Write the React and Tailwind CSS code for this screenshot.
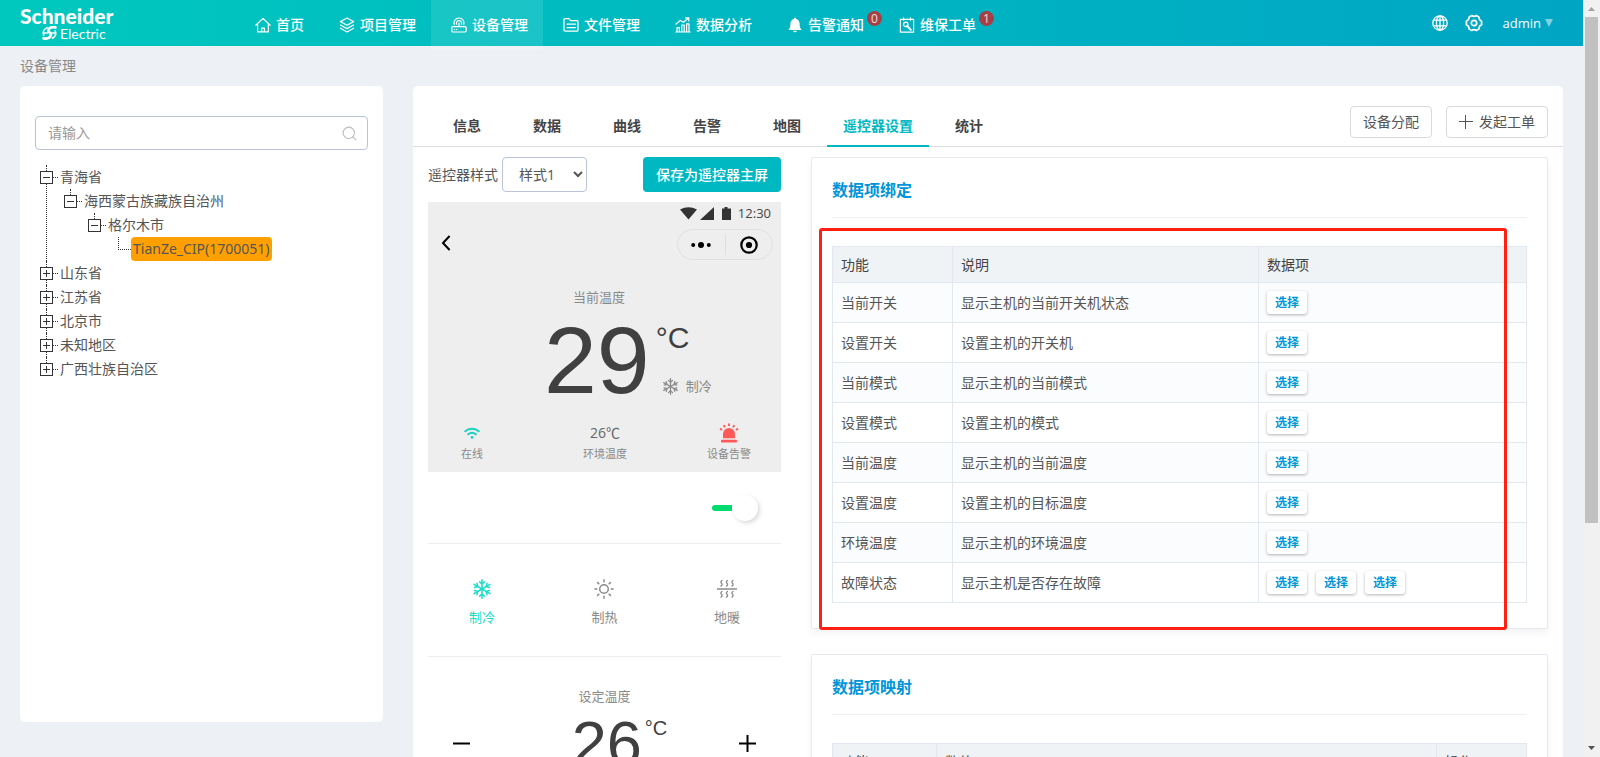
import { useState } from 'react';
import { Search } from 'lucide-react';
import clsx from 'clsx';

const stroke = { fill: 'none', stroke: 'currentColor', strokeLinecap: 'round', strokeLinejoin: 'round' };

const HomeIcon = () => (
  <svg width="16" height="16" viewBox="0 0 16 16" strokeWidth="1.2" {...stroke}>
    <path d="M.8 8.200 8 1.400l7.200 6.800M2.600 6.800v8h10.800v-8M6.600 14.600v-3.400h2.800v3.400" />
  </svg>
);

const LayersIcon = () => (
  <svg width="16" height="16" viewBox="0 0 16 16" strokeWidth="1.2" {...stroke}>
    <path d="M8 1 14.6 4.6 8 8.2 1.4 4.6zM1.4 8 8 11.6 14.6 8M1.4 11.3 8 15l6.6-3.7" />
  </svg>
);

const DeviceIcon = () => (
  <svg width="16" height="16" viewBox="0 0 16 16" strokeWidth="1.2" {...stroke}>
    <rect x=".8" y="9.6" width="14.4" height="5.4" rx="1.2" />
    <path d="M3.4 12.6h.2M5.6 12.6h.2M8 9.4V6.2M5.6 7.2a2.6 2.6 0 1 1 4.8 0M3.2 7.4a5 5 0 1 1 9.6 0" />
  </svg>
);

const FolderIcon = () => (
  <svg width="16" height="16" viewBox="0 0 16 16" strokeWidth="1.2" {...stroke}>
    <path d="M1 13.2V2.6a1 1 0 0 1 1-1h4l1.6 2H14a1 1 0 0 1 1 1v8.6a1 1 0 0 1-1 1H2a1 1 0 0 1-1-1zM4 7.2h8.4M4 10.6h8.4" />
  </svg>
);

const ChartIcon = () => (
  <svg width="16" height="16" viewBox="0 0 16 16" strokeWidth="1.2" {...stroke}>
    <path d="M.8 15h14.4M2 15v-4.4h2.4V15M6.8 15V8h2.4v7M11.6 15V6.8H14V15M1 7l4.4-3.6 3 1.8L13.6 1M10.6.9h3.2v3" />
  </svg>
);

const BellIcon = () => (
  <svg width="16" height="16" viewBox="0 0 16 16" fill="currentColor">
    <path d="M8 .8c.7 0 1.1.5 1.1 1.1 2.2.5 3.5 2.4 3.5 4.8 0 3.200.6 4.400 1.700 5.500v.8H1.700v-.8C2.800 11.100 3.400 9.900 3.400 6.700c0-2.400 1.300-4.300 3.500-4.800C6.900 1.300 7.300.8 8 .8zM6.200 13.700h3.600a1.800 1.500 0 0 1-3.600 0z" />
  </svg>
);

const OrderIcon = () => (
  <svg width="16" height="16" viewBox="0 0 16 16" strokeWidth="1.2" {...stroke}>
    <path d="M1.400 2.400h13.200v12.800H1.400zM4.600.8v2.400M11.400.8v2.400" />
    <path d="M8.200 8.800l3.600 4" strokeWidth="2" />
    <circle cx="6.800" cy="7.400" r="2.200" />
  </svg>
);

const GlobeIcon = () => (
  <svg width="16" height="16" viewBox="0 0 16 16" strokeWidth="1.3" {...stroke}>
    <circle cx="8" cy="8" r="7.200" />
    <ellipse cx="8" cy="8" rx="3.600" ry="7.200" />
    <path d="M8 .8v14.400M1.400 5.200h13.200M1.400 10.800h13.200" />
  </svg>
);

const GearIcon = () => (
  <svg width="18" height="18" viewBox="0 0 18 18" strokeWidth="1.700" {...stroke}>
    <path d="M6.600 1.500Q9 3.300 11.400 1.500L14 3.100Q13.800 6 16.600 7.200V10.800Q13.800 12 14 14.900L11.400 16.500Q9 14.700 6.600 16.500L4 14.900Q4.200 12 1.400 10.800V7.200Q4.200 6 4 3.100Z" />
    <circle cx="9" cy="9" r="2.700" />
  </svg>
);

const SnowIcon = ({ size }) => (
  <svg width={size} height={size} viewBox="0 0 20 20" strokeWidth="1.500" {...stroke}>
    {[0, 60, 120, 180, 240, 300].map(a => (
      <path key={a} transform={`rotate(${a} 10 10)`} d="M10 10V.8M7.600 2.800 10 5.200l2.400-2.400" />
    ))}
  </svg>
);

const SunIcon = () => (
  <svg width="20" height="20" viewBox="0 0 20 20" strokeWidth="1.500" {...stroke} strokeLinecap="butt">
    <circle cx="10" cy="10" r="4.300" />
    {[0, 45, 90, 135, 180, 225, 270, 315].map(a => (
      <path key={a} transform={`rotate(${a} 10 10)`} d="M10 .3v3" />
    ))}
  </svg>
);

const FloorHeatIcon = () => (
  <svg width="20" height="20" viewBox="0 0 20 20" strokeWidth="1.300" {...stroke}>
    <path d="M0 10h20" />
    {[5, 10.500, 16].map(x => (
      <path key={x} d={`M${x} 1.500q-2 1.200-.5 2.700t-.5 2.900M${x} 12.500q-2 1.200-.5 2.700t-.5 2.900`} />
    ))}
  </svg>
);

const WifiIcon = () => (
  <svg width="16" height="12" viewBox="0 0 16 12" strokeWidth="1.900" {...stroke}>
    <path d="M1.200 4.200a10.500 10.500 0 0 1 13.600 0M4.200 7.300a6 6 0 0 1 7.600 0" />
    <circle cx="8" cy="10.400" r="1.300" fill="currentColor" stroke="none" />
  </svg>
);

const AlarmIcon = () => (
  <svg width="20" height="20" viewBox="0 0 20 20" fill="currentColor">
    <path d="M4 15.200v-4.200a6 6 0 0 1 12 0v4.200z" />
    <rect x="2" y="16.800" width="16" height="2.800" rx="1.200" />
    <path d="M10 .5v2.400M4.800 2.200l1 2.200M15.200 2.200l-1 2.200M1 5.600l2 1.400M19 5.600l-2 1.400" stroke="currentColor" strokeWidth="1.900" />
  </svg>
);

const PlusIcon = () => (
  <svg width="14" height="14" viewBox="0 0 14 14" stroke="currentColor">
    <path d="M0 6.500h14M6.500 0v14" />
  </svg>
);

const navItems = [
  { label: '首页', Icon: HomeIcon },
  { label: '项目管理', Icon: LayersIcon },
  { label: '设备管理', Icon: DeviceIcon, active: true },
  { label: '文件管理', Icon: FolderIcon },
  { label: '数据分析', Icon: ChartIcon },
  { label: '告警通知', Icon: BellIcon, badge: 0 },
  { label: '维保工单', Icon: OrderIcon, badge: 1 },
];

const treeData = [
  {
    name: '青海省',
    children: [
      { name: '海西蒙古族藏族自治州', children: [{ name: '格尔木市', children: [{ name: 'TianZe_CIP(1700051)', leaf: true }] }] },
    ],
  },
  { name: '山东省' },
  { name: '江苏省' },
  { name: '北京市' },
  { name: '未知地区' },
  { name: '广西壮族自治区' },
];

const tabs = ['信息', '数据', '曲线', '告警', '地图', '遥控器设置', '统计'];

const bindings = [
  { name: '当前开关', desc: '显示主机的当前开关机状态', count: 1 },
  { name: '设置开关', desc: '设置主机的开关机', count: 1 },
  { name: '当前模式', desc: '显示主机的当前模式', count: 1 },
  { name: '设置模式', desc: '设置主机的模式', count: 1 },
  { name: '当前温度', desc: '显示主机的当前温度', count: 1 },
  { name: '设置温度', desc: '设置主机的目标温度', count: 1 },
  { name: '环境温度', desc: '显示主机的环境温度', count: 1 },
  { name: '故障状态', desc: '显示主机是否存在故障', count: 3 },
];

function Logo() {
  return (
    <a href="#" aria-label="Schneider Electric" className="block w-[235px] shrink-0 pt-[5px] pl-5 text-white font-['Lato']">
      <span className="block text-[21px] leading-[22px] font-black">Schneider</span>
      <span className="flex items-end pl-[22px]">
        <svg width="15" height="14" viewBox="0 0 15 14" fill="none" stroke="currentColor" strokeLinecap="round" className="-mt-[4px]">
          <path d="M13.400 1.400C9.400.6 6.400 2 6.200 4.400c-.1 2 3 2.200 2.600 4.600C8.300 11.800 5 13 1.600 12.400" strokeWidth="2.800" />
          <path d="M5 1.600C1.600 3.400.4 6.600 1.800 9.400M10.400 12.200c2.800-1.600 4-4.400 2.800-7.200" strokeWidth="1.600" />
          <path d="M2.400 7h3M9.600 7h3" strokeWidth="1.500" />
        </svg>
        <span className="pl-[3px] text-sm leading-[13px]">Electric</span>
      </span>
    </a>
  );
}

function Header() {
  return (
    <header className="h-[46px] shrink-0 flex items-start bg-linear-to-r from-[#00c8be] to-[#00a5c4] text-white">
      <Logo />
      <nav className="flex-1 flex">
        {navItems.map(({ label, Icon, active, badge }) => (
          <a key={label} href="#" className={clsx('h-[50px] pl-5 pr-[15px] flex items-center gap-[5px] text-sm font-medium', active && 'bg-white/10')}>
            <Icon />
            <span className="relative">
              {label}
              {badge !== undefined && (
                <span className="absolute left-full -top-1 ml-[3px] w-[15px] h-[15px] rounded-full bg-[#a73f46] text-white/80 text-xs leading-[15px] text-center">{badge}</span>
              )}
            </span>
          </a>
        ))}
      </nav>
      <div className="h-[46px] flex items-center pr-[30px]">
        <button aria-label="语言" className="mr-[17px]"><GlobeIcon /></button>
        <button aria-label="设置" className="mr-5"><GearIcon /></button>
        <button className="flex items-center gap-1 text-[13px] leading-[48px]">
          admin
          <svg width="8" height="8" viewBox="0 0 8 8" fill="currentColor" className="opacity-50"><path d="M0 0h8L4 8z" /></svg>
        </button>
      </div>
    </header>
  );
}

function TreeNode({ node, last }) {
  if (node.leaf) {
    return (
      <li className="flex h-6">
        <span className="ml-[6px] w-[13px] h-[13px] border-l border-b border-dotted border-[#333]" />
        <a href="#" className="h-6 px-[2px] rounded bg-[#ffa000] text-[#555] leading-[24px] font-['Noto_Sans']">{node.name}</a>
      </li>
    );
  }
  return (
    <li className="flex">
      <div className="w-[13px] flex flex-col items-center">
        <span className="h-[6px] border-l border-dotted border-[#333]" />
        <button aria-label={node.name} className="w-[13px] h-[13px] shrink-0 border border-[#333] text-[#333] bg-white">
          <svg width="11" height="11" viewBox="0 0 11 11" stroke="currentColor">
            <path d={node.children ? 'M2 5.500h7' : 'M2 5.500h7M5.500 2v7'} />
          </svg>
        </button>
        {!last && <span className="flex-1 border-l border-dotted border-[#333]" />}
      </div>
      <div>
        <div className="h-6 flex items-center">
          <span className="w-[5px] mr-[2px] border-t border-dotted border-[#333]" />
          <a href="#" className="leading-[24px]">{node.name}</a>
        </div>
        {node.children && <Tree nodes={node.children} nested />}
      </div>
    </li>
  );
}

function Tree({ nodes, nested }) {
  return (
    <ul className={nested ? 'ml-[11px]' : 'ml-5 mt-[15px] text-sm text-[#555]'}>
      {nodes.map((n, i) => <TreeNode key={n.name} node={n} last={i === nodes.length - 1} />)}
    </ul>
  );
}

function Sidebar() {
  return (
    <aside className="w-[363px] h-[636px] shrink-0 bg-white rounded-[5px] pt-[30px]">
      <label className="mx-[15px] h-[34px] flex items-center border border-[#b9c5d6] rounded px-[9px] pl-3">
        <input type="text" aria-label="搜索" placeholder="请输入" className="flex-1 min-w-0 text-sm text-[#555] placeholder:text-[#999] outline-none" />
        <Search size={17} strokeWidth={1.500} className="text-[#bbb]" />
      </label>
      <Tree nodes={treeData} />
    </aside>
  );
}

function RemotePreview() {
  const [on, setOn] = useState(true);

  return (
    <div className="mt-[10px] text-[13px] text-[#8a8a8a]">
      <div className="bg-[#eee]">
        <div className="h-[22px] flex items-center justify-end pr-[10px] text-[#333]">
          <svg width="51" height="13" viewBox="0 0 51 13" fill="currentColor">
            <path d="M0 2.500Q8.500-2 17 2.500L8.500 12.500zM20 13 34 0v13zM42 1.500h2.500V0h3v1.500H51V13h-9z" />
          </svg>
          <span className="pl-[7px] leading-[22px] text-[#444]">12:30</span>
        </div>
        <div className="mt-[5px] h-[31px] flex items-center justify-between pl-[13px] pr-2 text-black">
          <button aria-label="返回" className="pb-1">
            <svg width="10" height="16" viewBox="0 0 10 16" fill="none" stroke="currentColor" strokeWidth="2"><path d="M8.600 1 2 8l6.600 7" /></svg>
          </button>
          <div className="w-24 h-[31px] flex items-center rounded-full border border-[#e0e0e0]">
            <button aria-label="更多" className="flex-1 flex justify-center">
              <svg width="20" height="6" viewBox="0 0 20 6" fill="currentColor"><circle cx="2.200" cy="3" r="2" /><circle cx="10" cy="3" r="3" /><circle cx="17.800" cy="3" r="2" /></svg>
            </button>
            <span className="h-5 border-l border-[#ddd]" />
            <button aria-label="关闭" className="flex-1 flex justify-center">
              <svg width="18" height="18" viewBox="0 0 18 18"><circle cx="9" cy="9" r="7.700" fill="none" stroke="currentColor" strokeWidth="2.200" /><circle cx="9" cy="9" r="3.100" fill="currentColor" /></svg>
            </button>
          </div>
        </div>
        <div className="mt-[27px] pr-[11px] text-center leading-[20px]">当前温度</div>
        <div className="mt-[13px] mb-px pl-[116px] h-20 flex font-['Liberation_Sans'] text-[#404040]">
          <span className="text-[95px] leading-[80px]">29</span>
          <div className="pl-[6px] pt-[2px]">
            <div className="text-[30px] leading-[32px]">°C</div>
            <div className="mt-[22px] pl-[6px] flex items-center gap-[7px] text-[13px] leading-[20px] text-[#8a8a8a] font-['Noto_Sans_CJK_SC']">
              <SnowIcon size={17} /> 制冷
            </div>
          </div>
        </div>
        <div className="pt-[22px] pb-[10px] grid grid-cols-[88px_178px_70px] text-center text-[11px] leading-[16px]">
          <div>
            <div className="h-5 mb-[3px] flex items-center justify-center text-[#14d0c0]"><WifiIcon /></div>
            在线
          </div>
          <div>
            <div className="h-5 mb-[3px] text-sm leading-[20px] text-[#666]">26℃</div>
            环境温度
          </div>
          <div>
            <div className="h-5 mb-[3px] flex justify-center text-[#ff5a5a]"><AlarmIcon /></div>
            设备告警
          </div>
        </div>
      </div>

      <div className="h-[71px] flex items-center justify-end pr-[23px]">
        <label className="flex items-center cursor-pointer">
          <input type="checkbox" aria-label="开关" checked={on} onChange={e => setOn(e.target.checked)} className="sr-only" />
          <span className={clsx('w-5 h-[6px] rounded-l-full', on ? 'bg-[#00dc6e]' : 'bg-[#ccc]')} />
          <span className="w-[26px] h-[26px] rounded-full bg-white shadow-[2px_2px_4px_rgba(0,0,0,0.15)]" />
        </label>
      </div>

      <div className="border-t border-[#eee] pt-[35px] pb-[29px] px-[41px] flex justify-between leading-[20px]">
        <button className="flex flex-col items-center gap-2 text-[#1bdcc8]"><SnowIcon size={20} />制冷</button>
        <button className="flex flex-col items-center gap-2"><SunIcon />制热</button>
        <button className="flex flex-col items-center gap-2"><FloorHeatIcon />地暖</button>
      </div>

      <div className="border-t border-[#eee] pt-[29px] text-center leading-[20px]">设定温度</div>
      <div className="mt-[5px] px-[25px] flex items-center justify-between text-black">
        <button aria-label="降低"><svg width="17" height="17" viewBox="0 0 17 17" stroke="currentColor" strokeWidth="2"><path d="M0 8.500h17" /></svg></button>
        <div className="pl-[30px] flex gap-[3px] font-['Liberation_Sans'] text-[#404040]">
          <span className="text-[63px] leading-[64px]">26</span>
          <span className="pt-[7px] text-[20px] leading-[20px]">°C</span>
        </div>
        <button aria-label="升高"><svg width="17" height="17" viewBox="0 0 17 17" stroke="currentColor" strokeWidth="2"><path d="M0 8.500h17M8.500 0v17" /></svg></button>
      </div>
    </div>
  );
}

function Card({ title, children }) {
  return (
    <section className="relative px-5 pb-[25px] bg-white border border-[#e4eaf0] rounded-[2px] shadow-[0_4px_8px_rgba(0,0,0,0.05)]">
      <h2 className="h-[60px] mb-7 border-b border-[#edf0f4] text-base leading-[64px] font-bold text-[#0095d9]">{title}</h2>
      {children}
    </section>
  );
}

const cell = 'border border-[#e1e8ef] px-2';

export default function App() {
  const [tab, setTab] = useState('遥控器设置');

  return (
    <div className="h-screen flex overflow-hidden bg-[#edf1f5] text-[#555] font-['Open_Sans','Noto_Sans_CJK_SC',sans-serif]">
      <div className="flex-1 min-w-0 flex flex-col">
        <Header />
        <div className="h-10 shrink-0 px-5 text-sm leading-[40px] text-[#888]">设备管理</div>
        <div className="flex items-start gap-[30px] pl-5 pr-5">
          <Sidebar />
          <main className="flex-1 min-w-0 bg-white rounded-[5px]">
            <div className="h-[61px] pt-5 pl-[14px] pr-[15px] flex items-start border-b border-[#dcdcdc]">
              <div role="tablist" className="flex-1 flex">
                {tabs.map(t => (
                  <button
                    key={t}
                    role="tab"
                    aria-selected={t === tab}
                    onClick={() => setTab(t)}
                    className={clsx('h-[41px] min-w-20 px-4 text-sm font-bold border-b-2', t === tab ? 'text-[#00b8c2] border-[#00b8c2]' : 'text-[#444] border-transparent')}
                  >
                    {t}
                  </button>
                ))}
              </div>
              <div className="flex gap-[14px] text-sm">
                <button className="h-8 px-3 border border-[#d9d9d9] rounded">设备分配</button>
                <button className="h-8 px-3 border border-[#d9d9d9] rounded flex items-center gap-[6px]"><PlusIcon />发起工单</button>
              </div>
            </div>

            <div className="flex items-start gap-[30px] pt-[10px] px-[15px]">
              <div className="w-[353px] shrink-0">
                <div className="flex items-center text-sm">
                  <label htmlFor="style">遥控器样式</label>
                  <select id="style" className="ml-1 w-[85px] h-[35px] pl-3 border border-[#b9c5d6] rounded bg-white">
                    <option>样式1</option>
                    <option>样式2</option>
                  </select>
                  <button className="ml-auto h-[35px] px-[13px] rounded bg-[#00b8c2] text-white font-medium">保存为遥控器主屏</button>
                </div>
                <RemotePreview />
              </div>

              <div className="flex-1 min-w-0 flex flex-col gap-[25px] text-sm">
                <Card title="数据项绑定">
                  <table className="w-full table-fixed border-collapse">
                    <thead>
                      <tr className="h-9 bg-[#eff3f6] text-left text-[#444]">
                        <th className={clsx(cell, 'w-[120px] font-normal')}>功能</th>
                        <th className={clsx(cell, 'w-[306px] font-normal')}>说明</th>
                        <th className={clsx(cell, 'font-normal')}>数据项</th>
                      </tr>
                    </thead>
                    <tbody>
                      {bindings.map(b => (
                        <tr key={b.name} className="h-10 odd:bg-[#fafcfe]">
                          <td className={cell}>{b.name}</td>
                          <td className={cell}>{b.desc}</td>
                          <td className={cell}>
                            <div className="flex gap-[9px]">
                              {Array.from({ length: b.count }, (_, i) => (
                                <button key={i} className="w-10 h-[23px] rounded-[3px] bg-white text-xs font-bold text-[#0095d9] shadow-[0_1px_3px_rgba(0,0,0,0.3)]">选择</button>
                              ))}
                            </div>
                          </td>
                        </tr>
                      ))}
                    </tbody>
                  </table>
                  {/* highlight frame over the binding table */}
                  <div className="absolute left-[7px] right-10 top-[70px] -bottom-[2px] border-3 border-[#ff2012] rounded-[3px] pointer-events-none" />
                </Card>
                <Card title="数据项映射">
                  <table className="w-full table-fixed border-collapse">
                    <thead>
                      <tr className="h-9 bg-[#eff3f6] text-left text-[#444]">
                        <th className={clsx(cell, 'w-[104px] font-normal')}>功能</th>
                        <th className={clsx(cell, 'font-normal')}>数值</th>
                        <th className={clsx(cell, 'w-[90px] font-normal')}>操作</th>
                      </tr>
                    </thead>
                  </table>
                </Card>
              </div>
            </div>
          </main>
        </div>
      </div>

      {/* window scrollbar */}
      <div aria-hidden="true" className="w-[17px] shrink-0 flex flex-col items-center bg-[#f1f1f1]">
        <svg width="17" height="17" viewBox="0 0 17 17" className="shrink-0" fill="#a3a3a3"><path d="M5 11h7L8.500 7z" /></svg>
        <div className="w-[13px] h-[506px] bg-[#c1c1c1]" />
        <svg width="17" height="17" viewBox="0 0 17 17" className="shrink-0 mt-auto" fill="#505050"><path d="M5 6h7l-3.500 4z" /></svg>
      </div>
    </div>
  );
}
